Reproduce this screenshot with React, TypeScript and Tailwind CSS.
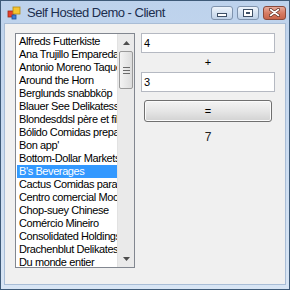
import React from "react";

const customers = [
  "Alfreds Futterkiste",
  "Ana Trujillo Emparedados y helados",
  "Antonio Moreno Taquería",
  "Around the Horn",
  "Berglunds snabbköp",
  "Blauer See Delikatessen",
  "Blondesddsl père et fils",
  "Bólido Comidas preparadas",
  "Bon app'",
  "Bottom-Dollar Markets",
  "B's Beverages",
  "Cactus Comidas para llevar",
  "Centro comercial Moctezuma",
  "Chop-suey Chinese",
  "Comércio Mineiro",
  "Consolidated Holdings",
  "Drachenblut Delikatessen",
  "Du monde entier",
];

const SELECTED = "B's Beverages";

const font = { fontFamily: '"Liberation Sans", Arial, sans-serif' };

const CaptionButton = ({ kind }: { kind: "min" | "max" | "close" }) => {
  if (kind === "close") {
    return (
      <div className="w-[23px] h-[14px] rounded-[3px] border border-[#8a4a3c] bg-gradient-to-b from-[#e6ab9c] via-[#d77c64] to-[#c8654b] flex items-center justify-center">
        <svg width="11" height="9" viewBox="0 0 11 9">
          <path d="M1.5 1.5 L9.5 7.5 M9.5 1.5 L1.5 7.5" stroke="#5a2a20" strokeWidth="3" strokeLinecap="round" />
          <path d="M1.5 1.5 L9.5 7.5 M9.5 1.5 L1.5 7.5" stroke="#ffffff" strokeWidth="1.6" strokeLinecap="round" />
        </svg>
      </div>
    );
  }
  return (
    <div className="w-[22px] h-[14px] rounded-[3px] border border-[#7f93ad] bg-gradient-to-b from-[#eef4fb] via-[#d5e2f1] to-[#bfd1e7] flex items-center justify-center">
      {kind === "min" ? (
        <div className="w-[10px] h-[4px] mt-[4px] border border-[#3d4f66] bg-white" />
      ) : (
        <div className="w-[10px] h-[8px] border border-[#3d4f66] bg-white flex items-center justify-center">
          <div className="w-[4px] h-[2px] border border-[#3d4f66]" />
        </div>
      )}
    </div>
  );
};

const ScrollBar = () => (
  <div className="w-[17px] h-full bg-[#eaeaea] border-l border-[#e2e2e2] flex flex-col">
    <div className="h-[17px] flex items-center justify-center">
      <svg width="7" height="4" viewBox="0 0 7 4">
        <path d="M0 4 L3.5 0 L7 4 Z" fill="#4d4d4d" />
      </svg>
    </div>
    <div className="mx-[1px] h-[38px] rounded-[2px] border border-[#9a9a9a] bg-gradient-to-r from-[#f3f3f3] to-[#dcdcdc] flex flex-col items-center justify-center gap-[2px]">
      <div className="w-[7px] h-[1px] bg-[#6a6a6a]" />
      <div className="w-[7px] h-[1px] bg-[#6a6a6a]" />
      <div className="w-[7px] h-[1px] bg-[#6a6a6a]" />
    </div>
    <div className="flex-1" />
    <div className="h-[17px] flex items-center justify-center">
      <svg width="7" height="4" viewBox="0 0 7 4">
        <path d="M0 0 L3.5 4 L7 0 Z" fill="#4d4d4d" />
      </svg>
    </div>
  </div>
);

const App = () => {
  return (
    <div
      className="w-[290px] h-[290px] bg-gradient-to-b from-[#bdd2ec] to-[#d8e5f4] border border-[#3e5a78] flex flex-col overflow-hidden"
      style={font}
    >
      {/* title bar */}
      <div className="h-[21px] flex items-center pl-[6px] pr-[3px] shrink-0">
        <svg width="14" height="14" viewBox="0 0 14 14" className="mr-[6px] mt-[2px]">
          <rect x="1" y="5" width="6" height="6" fill="#e8402c" stroke="#9a2a1a" strokeWidth="0.8" />
          <rect x="6" y="1" width="7" height="7" fill="#f6c531" stroke="#b38a12" strokeWidth="0.8" />
          <rect x="5" y="9" width="4" height="4" fill="#3d7fd6" stroke="#1f4f9a" strokeWidth="0.8" />
        </svg>
        <span className="text-[13px] text-[#1c2e4e] tracking-[-0.5px] mt-[2px]">
          Self Hosted Demo - Client
        </span>
        <div className="ml-auto flex items-center gap-[4px] mt-[2px]">
          <CaptionButton kind="min" />
          <CaptionButton kind="max" />
          <CaptionButton kind="close" />
        </div>
      </div>

      {/* client area */}
      <div className="flex-1 mx-[3px] mb-[4px] mt-[1px] border border-[#a9bdd6] bg-[#f0f0f0] flex pl-[10px] pt-[9px]">
        <div className="w-[120px] h-[235px] border border-[#828790] bg-white flex">
          <div className="flex-1 pt-[1px] pl-[1px] overflow-hidden">
            {customers.map((c) => (
              <div
                key={c}
                className={
                  "h-[13px] leading-[13px] text-[11px] tracking-[-0.4px] pl-[2px] whitespace-nowrap overflow-hidden " +
                  (c === SELECTED ? "bg-[#3399ff] text-white" : "text-black")
                }
              >
                {c}
              </div>
            ))}
          </div>
          <ScrollBar />
        </div>

        <div className="w-[134px] ml-[6px] flex flex-col items-center">
          <div className="w-full h-[20px] border border-[#b5b9c2] bg-white text-[11px] leading-[18px] pl-[2px] text-black">
            4
          </div>
          <div className="h-[19px] leading-[19px] text-[11px] text-black">+</div>
          <div className="w-full h-[20px] border border-[#b5b9c2] bg-white text-[11px] leading-[18px] pl-[2px] text-black">
            3
          </div>
          <div className="w-[128px] h-[22px] mt-[8px] rounded-[3px] border border-[#707070] bg-gradient-to-b from-[#f4f4f4] via-[#e6e6e6] to-[#d2d2d2] shadow-[inset_0_0_0_1px_#fbfbfb] flex items-center justify-center text-[11px] text-black">
            =
          </div>
          <div className="mt-[6px] text-[12px] text-[#222]">7</div>
        </div>
      </div>
    </div>
  );
};

export default App;
